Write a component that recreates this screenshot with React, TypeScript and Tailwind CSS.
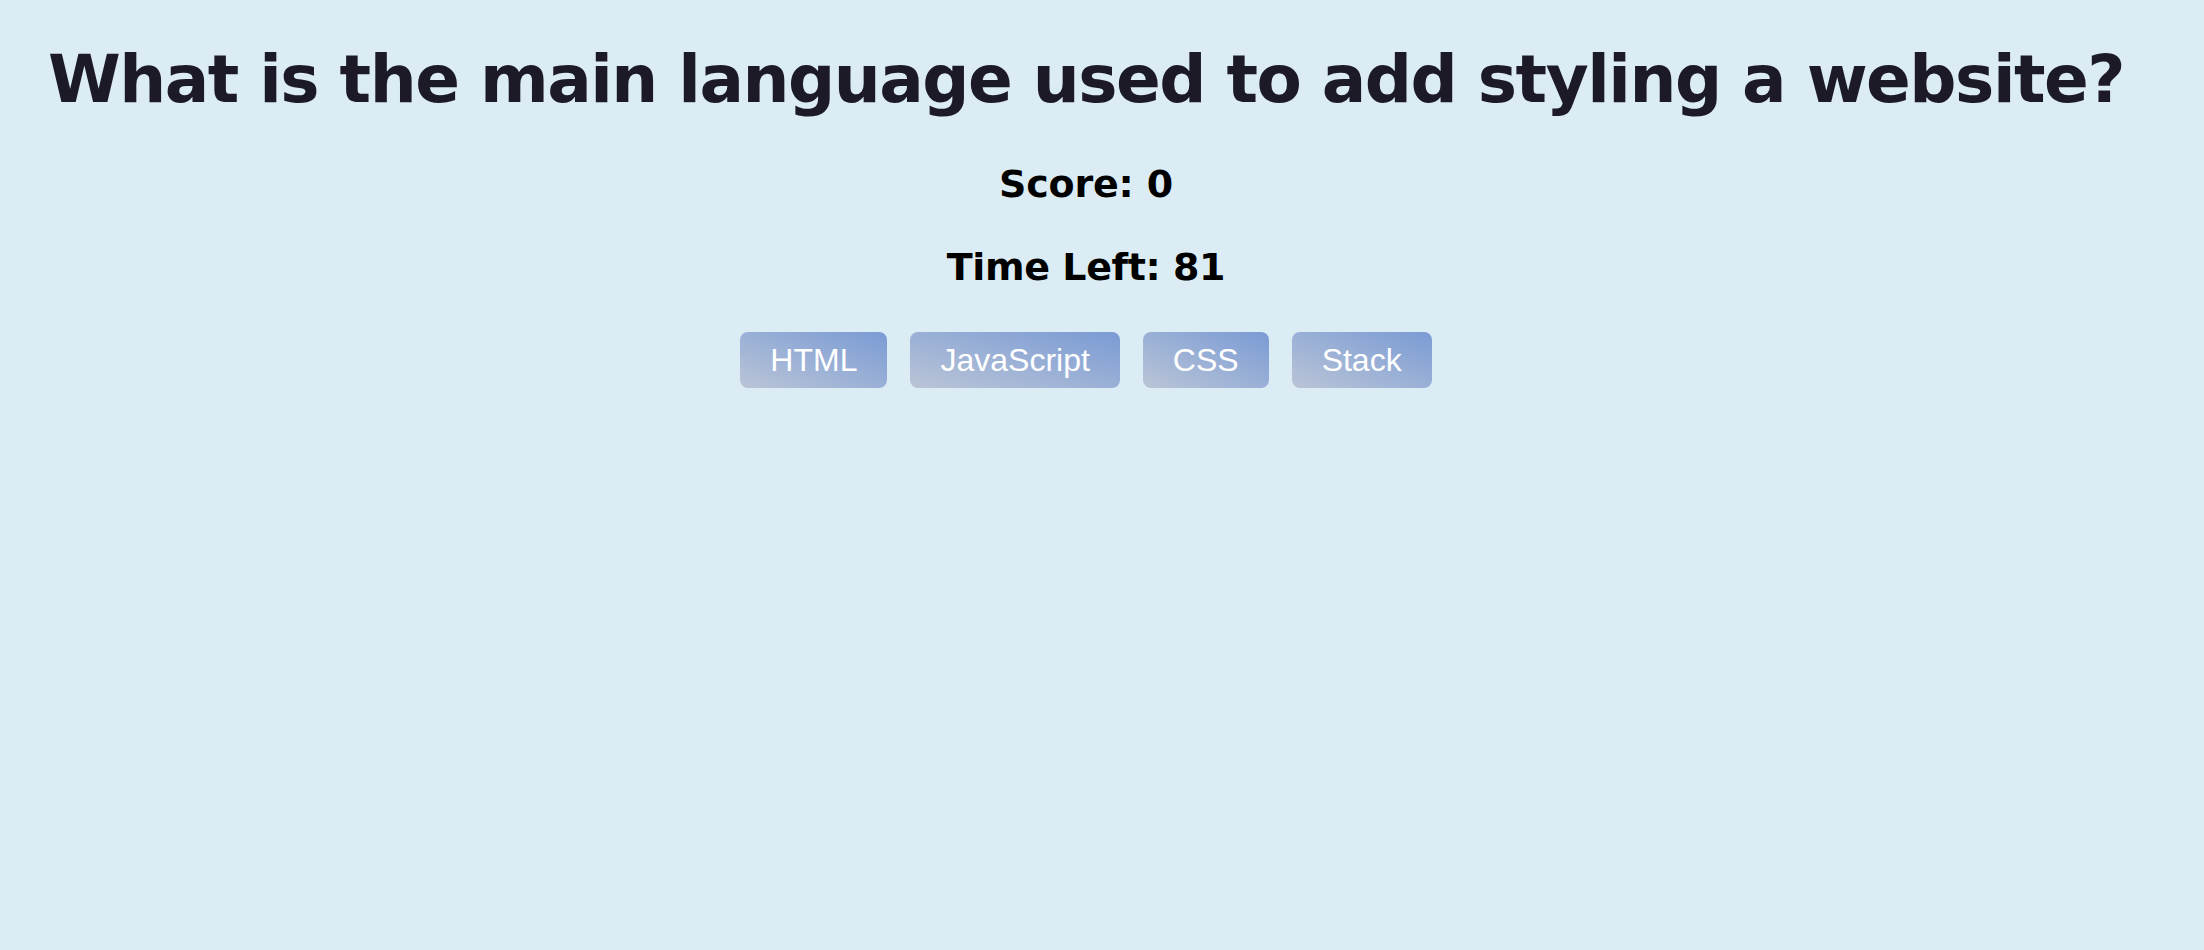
export default function App() {
  const options = ["HTML", "JavaScript", "CSS", "Stack"];
  return (
    <div className="min-h-[950px] w-full bg-[#dbecf4]">
      <div className="flex w-[2172px] flex-col items-center pt-[47px]">
        <h1 className="whitespace-nowrap text-center font-['DejaVu_Sans',Verdana,sans-serif] text-[66px] font-bold leading-none tracking-[-1.5px] text-[#1c1a27]">
          What is the main language used to add styling a website?
        </h1>
        <p className="mt-[52px] font-['DejaVu_Sans',Verdana,sans-serif] text-[38px] font-bold leading-none tracking-[-0.2px] text-black">
          Score: 0
        </p>
        <p className="mt-[45px] font-['DejaVu_Sans',Verdana,sans-serif] text-[38px] font-bold leading-none tracking-[-0.4px] text-black">
          Time Left: 81
        </p>
        <div className="mt-[46px] flex gap-[23px]">
          {options.map((o) => (
            <button
              key={o}
              className="h-[56px] rounded-[8px] bg-gradient-to-tr from-[#bac4d6] to-[#7a9bd4] px-[30px] font-['Liberation_Sans',Arial,sans-serif] text-[32px] leading-[56px] text-white"
            >
              {o}
            </button>
          ))}
        </div>
      </div>
    </div>
  );
}
